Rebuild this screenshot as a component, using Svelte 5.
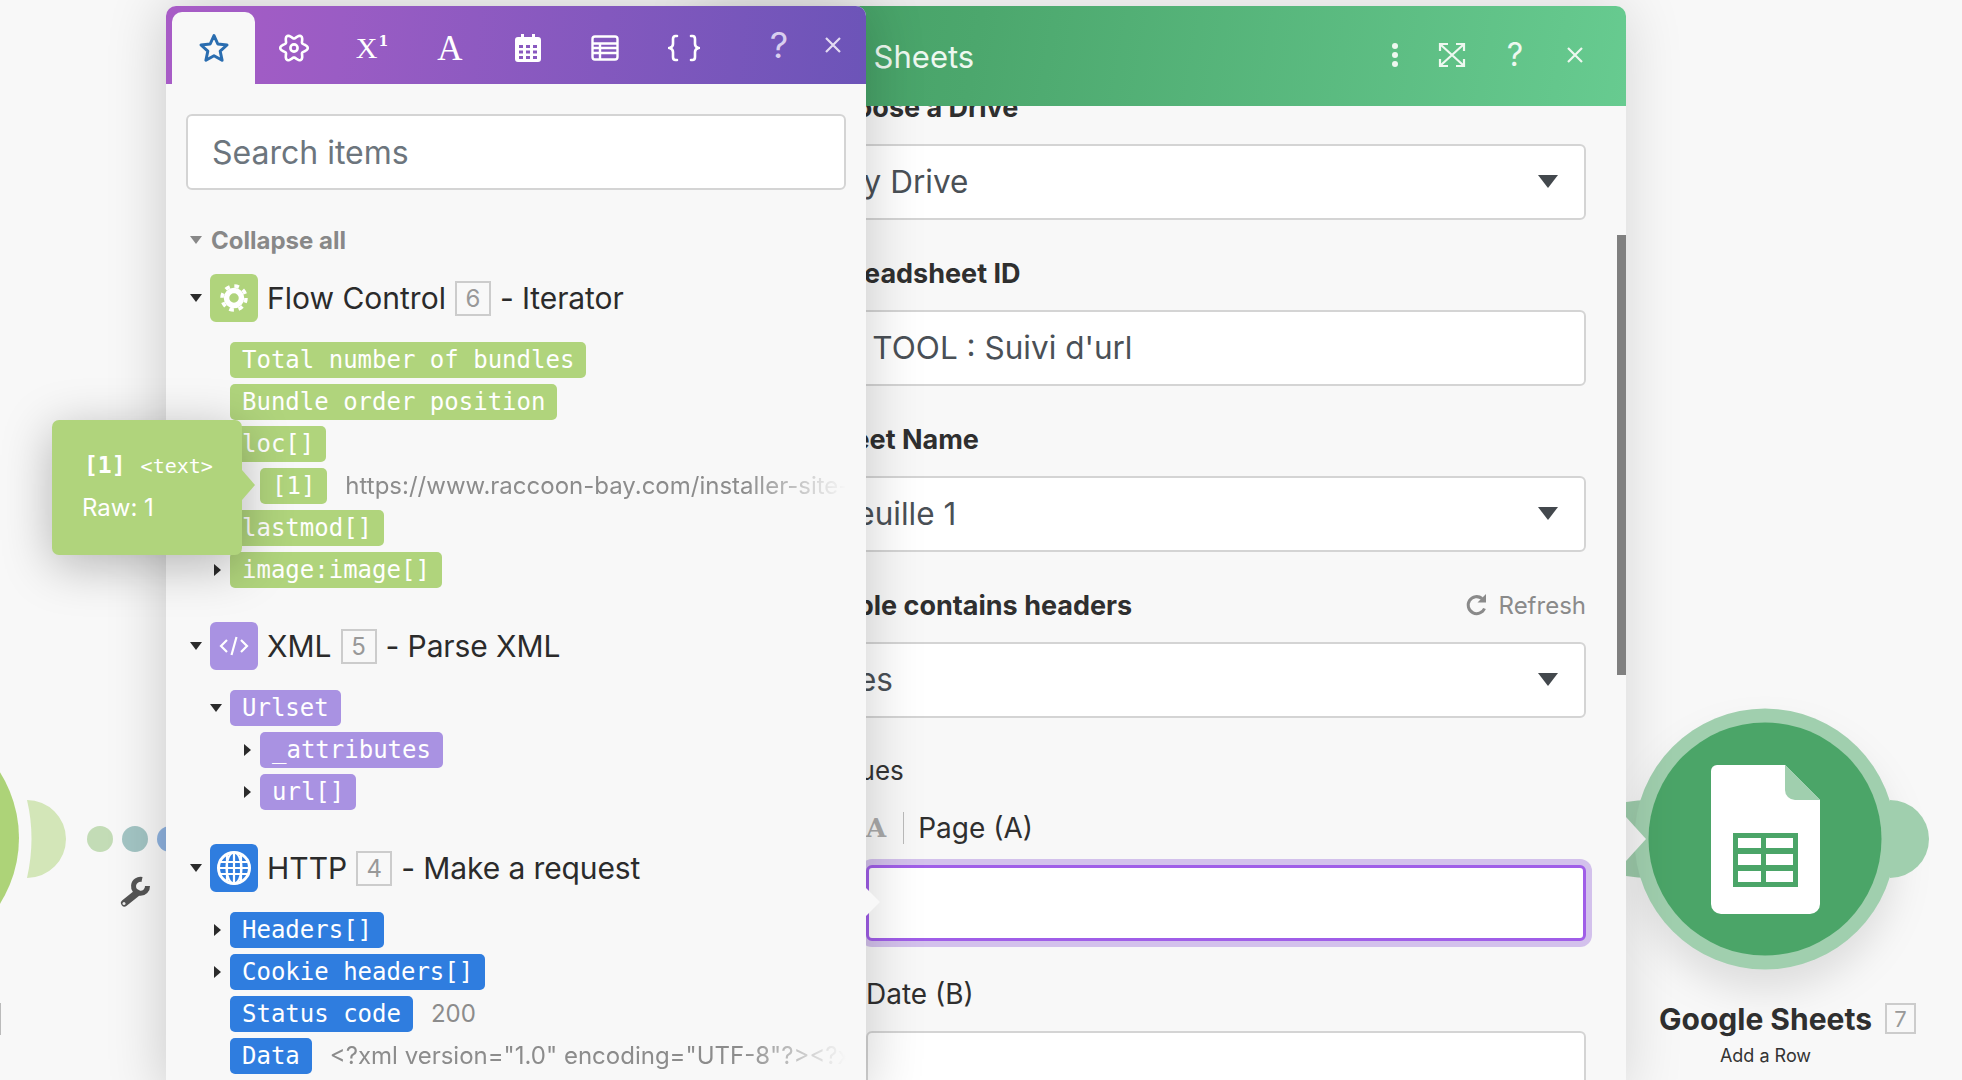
<script>
	const sections = [
		{
			tone: 'green',
			icon: 'gear',
			name: 'Flow Control',
			num: 6,
			action: 'Iterator',
			rows: [
				{ label: 'Total number of bundles', level: 1 },
				{ label: 'Bundle order position', level: 1 },
				{ label: 'loc[]', level: 1 },
				{ label: '[1]', level: 2, value: 'https://www.raccoon-bay.com/installer-site-web-wordpress/', fade: true },
				{ label: 'lastmod[]', level: 1 },
				{ label: 'image:image[]', level: 1, caret: 'right' }
			]
		},
		{
			tone: 'purple',
			icon: 'code',
			name: 'XML',
			num: 5,
			action: 'Parse XML',
			rows: [
				{ label: 'Urlset', level: 1, caret: 'down' },
				{ label: '_attributes', level: 2, caret: 'right' },
				{ label: 'url[]', level: 2, caret: 'right' }
			]
		},
		{
			tone: 'blue',
			icon: 'globe',
			name: 'HTTP',
			num: 4,
			action: 'Make a request',
			rows: [
				{ label: 'Headers[]', level: 1, caret: 'right' },
				{ label: 'Cookie headers[]', level: 1, caret: 'right' },
				{ label: 'Status code', level: 1, value: '200' },
				{ label: 'Data', level: 1, value: '<?xml version="1.0" encoding="UTF-8"?><?xml-stylesheet type="text/xsl"', fade: true }
			]
		}
	];

	const fields = [
		{ label: 'Choose a Drive', value: 'My Drive', select: true },
		{ label: 'Spreadsheet ID', value: 'M TOOL : Suivi d\'url' },
		{ label: 'Sheet Name', value: 'Feuille 1', select: true, inset: true },
		{ label: 'Table contains headers', value: 'Yes', select: true, inset: true, refresh: true }
	];

	// six lobed outline for the settings tab icon
	const cogPath = Array.from({ length: 72 }, (_, i) => {
		const a = (i / 72) * Math.PI * 2;
		const r = 11.6 + 2.2 * Math.cos(a * 6);
		return `${i ? 'L' : 'M'}${(15 + r * Math.cos(a)).toFixed(2)} ${(15 + r * Math.sin(a)).toFixed(2)}`;
	}).join('') + 'Z';
</script>

<div class="canvas">
	<!-- modules behind the panels -->
	<svg class="flow-left" viewBox="0 0 200 180">
		<circle cx="-104" cy="88" r="123" fill="#add378" />
		<path d="M27 50A39 39 0 0 1 27 128Q36 88 27 50Z" fill="#d3e6b8" />
		<circle cx="100" cy="89" r="13" fill="#c3dcb6" />
		<circle cx="135" cy="89" r="13" fill="#a3c5c4" />
		<circle cx="170" cy="89" r="13" fill="#8fb3e0" />
		<path d="M142 129.500A7 7 0 1 0 147.500 136" fill="none" stroke="#555" stroke-width="5" />
		<path d="M137 143L124.500 153" stroke="#555" stroke-width="7" stroke-linecap="round" />
		<circle cx="124" cy="153.500" r="1.500" fill="#eee" />
	</svg>
	<div class="edge-mark"></div>

	<div class="sheets-node">
		<svg class="sheets-graphic" viewBox="0 0 310 270">
			<path d="M6 94Q18 92 30 92V170Q18 170 6 168Z" fill="#a0cfae" />
			<circle class="node-ring" cx="145" cy="131" r="130.5" fill="#a0cfae" />
			<path d="M270 92A39 39 0 0 1 270 170Z" fill="#a0cfae" />
			<path d="M6 109L26 131L6 153Z" fill="#f3f3f3" />
			<circle cx="145" cy="131" r="116.5" fill="#4ba568" />
			<path d="M97 57H165L200 92V196a10 10 0 0 1-10 10H101a10 10 0 0 1-10-10V63a6 6 0 0 1 6-6Z" fill="#fff" />
			<path d="M165 57L200 92H175a10 10 0 0 1-10-10Z" fill="#a0cfae" />
			<path fill="#4ba568" fill-rule="evenodd" d="M113 125H178V179H113ZM118 130V140H141V130ZM146 130V140H173V130ZM118 146V157H141V146ZM146 146V157H173V146ZM118 163V174H141V163ZM146 163V174H173V163Z" />
		</svg>
		<div class="node-title">
			<strong>Google Sheets</strong>
			<span class="num small">7</span>
		</div>
		<div class="node-sub">Add a Row</div>
	</div>

	<!-- module settings window -->
	<section class="sheets">
		<header class="sheets-head">
			<span class="sheets-title">Google Sheets</span>
			<div class="head-tools">
				<svg class="tool-dots" width="10" height="26" viewBox="0 0 10 26"><g fill="#eef8f0"><circle cx="5" cy="4" r="3" /><circle cx="5" cy="13" r="3" /><circle cx="5" cy="22" r="3" /></g></svg>
				<svg width="28" height="26" viewBox="0 0 28 26" fill="none" stroke="#eef8f0" stroke-width="2.200"><path d="M2 9V2H10M18 2H26V9M2 17V24H10M18 24H26V17M3 3L25 23M25 3L3 23" /></svg>
				<span class="qmark">?</span>
				<svg width="18" height="18" viewBox="0 0 18 18" stroke="#eef8f0" stroke-width="2.200"><path d="M2 2L16 16M16 2L2 16" /></svg>
			</div>
		</header>
		<div class="sheets-body">
			{#each fields as field}
				<div class="field-head" class:shifted={field.refresh}>
					<span class="field-label">{field.label}</span>
					{#if field.refresh}
						<span class="refresh">
							<svg width="24" height="24" viewBox="0 0 24 24" fill="none" stroke="#8a8a8a" stroke-width="3"><path d="M19.500 15.500A8.500 8.500 0 1 1 17 5.500" /><path d="M21 1V9.500H12.500Z" fill="#8a8a8a" stroke="none" /></svg>
							Refresh
						</span>
					{/if}
				</div>
				<div class="input" class:inset={field.inset}>
					<span>{field.value}</span>
					{#if field.select}<i class="select-caret"></i>{/if}
				</div>
			{/each}

			<div class="values-title">Values</div>
			<div class="value-name first"><b class="type-a">A</b><i class="divider"></i>Page (A)</div>
			<div class="input nested focused"></div>
			<div class="value-name second">Date (B)</div>
			<div class="input nested"></div>
		</div>
		<div class="scrollbar"></div>
	</section>

	<!-- mapping panel -->
	<section class="mapper">
		<header class="tabs">
			<div class="tab active">
				<svg width="32" height="32" viewBox="0 0 32 32" fill="none" stroke="#2a6db0" stroke-width="3" stroke-linejoin="round"><path d="M16 3.500L19.800 12L29 13L22.200 19.200L24.100 28.300L16 23.700L7.900 28.300L9.800 19.200L3 13L12.200 12Z" /></svg>
			</div>
			<div class="tab">
				<svg width="30" height="30" viewBox="0 0 30 30" fill="none" stroke="#fff" stroke-width="2.600" stroke-linejoin="round"><circle cx="15" cy="15" r="3.600" /><path d={cogPath} /></svg>
			</div>
			<div class="tab glyph">X<sup>1</sup></div>
			<div class="tab glyph big">A</div>
			<div class="tab">
				<svg width="26" height="30" viewBox="0 0 26 30">
					<path fill="#fff" fill-rule="evenodd" d="M3 4H6V1H9V4H17V1H20V4H23a3 3 0 0 1 3 3V26a3 3 0 0 1-3 3H3a3 3 0 0 1-3-3V7a3 3 0 0 1 3-3ZM4 12V15H8V12ZM11 12V15H15V12ZM18 12V15H22V12ZM4 17.500V20.500H8V17.500ZM11 17.500V20.500H15V17.500ZM18 17.500V20.500H22V17.500ZM4 23V26H8V23ZM11 23V26H15V23ZM18 23V26H22V23Z" />
				</svg>
			</div>
			<div class="tab">
				<svg class="table-icon" width="28" height="26" viewBox="0 0 28 26" fill="none" stroke="#fff" stroke-width="2.400"><rect x="1.500" y="1.500" width="25" height="23" rx="2.500" /><path d="M1.500 8.500H26.500M1.500 13H26.500M1.500 18H26.500M9 8.500V24" /></svg>
			</div>
			<div class="tab">
				<svg width="32" height="28" viewBox="0 0 32 28" fill="none" stroke="#fff" stroke-width="2.600" stroke-linecap="round"><path d="M9 2H7.500Q5 2 5 5V10Q5 13 1.500 14Q5 15 5 18V23Q5 26 7.500 26H9M23 2H24.500Q27 2 27 5V10Q27 13 30.500 14Q27 15 27 18V23Q27 26 24.500 26H23" /></svg>
			</div>
			<span class="tab-help">?</span>
			<svg class="tab-close" width="18" height="18" viewBox="0 0 18 18" stroke="#e3dbf2" stroke-width="2.200"><path d="M2 2L16 16M16 2L2 16" /></svg>
		</header>

		<div class="mapper-body">
			<div class="search">Search items</div>
			<div class="collapse"><i class="caret down muted"></i>Collapse all</div>

			{#each sections as section}
				<div class="section {section.tone}">
					<div class="section-head">
						<i class="caret down"></i>
						<span class="badge">
							{#if section.icon === 'gear'}
								<svg width="30" height="30" viewBox="0 0 30 30" fill="none" stroke="#fff"><circle cx="15" cy="15" r="7.500" stroke-width="5.500" /><circle cx="15" cy="15" r="12" stroke-width="3.500" stroke-dasharray="4.710 4.710" /></svg>
							{:else if section.icon === 'code'}
								<svg width="30" height="24" viewBox="0 0 30 24" fill="none" stroke="#fff" stroke-width="2.200"><path d="M8 6L2 12L8 18M22 6L28 12L22 18M17.500 3L12.500 21" /></svg>
							{:else}
								<svg width="36" height="36" viewBox="0 0 36 36" fill="none" stroke="#fff" stroke-width="2.200"><circle cx="18" cy="18" r="15.500" stroke-width="3" /><ellipse cx="18" cy="18" rx="7.500" ry="15.500" /><path d="M18 2.500V33.500M3 12H33M3 18H33M3 24H33M11 4V32M25 4V32" /></svg>
							{/if}
						</span>
						<span class="section-name">{section.name}</span>
						<span class="num">{section.num}</span>
						<span class="section-name action">- {section.action}</span>
					</div>
					<div class="rows">
						{#each section.rows as row}
							<div class="row" class:deep={row.level === 2}>
								<span class="caret-slot">
									{#if row.caret}<i class="caret {row.caret}"></i>{/if}
								</span>
								<span class="pill">{row.label}</span>
								{#if row.value}
									<span class="value" class:fade={row.fade}>{row.value}</span>
								{/if}
							</div>
						{/each}
					</div>
				</div>
			{/each}
		</div>
		<i class="pointer"></i>
	</section>

	<div class="tooltip">
		<div class="tip-key"><b>[1]</b> <span>&lt;text&gt;</span></div>
		<div class="tip-raw">Raw: 1</div>
	</div>
</div>

<style>
	:global(body) {
		margin: 0;
		background: #f8f8f8;
	}

	.canvas {
		position: relative;
		width: 1962px;
		height: 1080px;
		overflow: hidden;
		background: #f8f8f8;
		font-family: Inter, 'Noto Sans', sans-serif;
		color: #2b2b2b;
	}

	.flow-left {
		position: absolute;
		left: 0;
		top: 750px;
		width: 200px;
		height: 180px;
	}

	.edge-mark {
		position: absolute;
		left: 0;
		top: 1003px;
		width: 1px;
		height: 32px;
		background: #bbb;
	}

	/* google sheets module */
	.sheets-node {
		position: absolute;
		left: 1620px;
		top: 708px;
		width: 310px;
	}

	.sheets-graphic {
		display: block;
		width: 310px;
		height: 270px;
		overflow: visible;
	}

	.node-ring {
		filter: drop-shadow(0 22px 18px rgba(0, 0, 0, 0.1));
	}

	.node-title {
		display: flex;
		align-items: center;
		gap: 13px;
		margin: 25px 0 0 39px;
		font-size: 30px;
		line-height: 30px;
	}

	.node-title strong {
		font-weight: 700;
		color: #2f2f2f;
	}

	.node-sub {
		margin: 11px 0 0;
		width: 291px;
		text-align: center;
		font-size: 18px;
		line-height: 22px;
		color: #333;
	}

	/* settings window */
	.sheets {
		position: absolute;
		left: 700px;
		top: 6px;
		width: 926px;
		height: 1090px;
		background: #f8f8f8;
		border-radius: 10px 10px 0 0;
		box-shadow: 0 0 60px rgba(0, 0, 0, 0.14);
		overflow: hidden;
	}

	.sheets-head {
		position: relative;
		z-index: 1;
		display: flex;
		align-items: center;
		justify-content: space-between;
		height: 100px;
		padding: 0 42px 0 60px;
		background: linear-gradient(100deg, #429e62 0%, #4ca76d 30%, #67cb90 100%);
		color: #eef8f0;
	}

	.sheets-title {
		font-size: 31px;
	}

	.head-tools {
		display: flex;
		align-items: center;
		gap: 36px;
		margin-top: -2px;
	}

	.tool-dots {
		margin-right: 2px;
	}

	.qmark {
		width: 22px;
		font-size: 32px;
		line-height: 26px;
		text-align: center;
		margin-left: 2px;
		margin-right: 4px;
	}

	.sheets-body {
		margin-top: -16px;
		padding: 0 40px 0 122px;
	}

	.field-head {
		display: flex;
		align-items: center;
		justify-content: space-between;
		height: 34px;
		margin-bottom: 20px;
	}

	.field-label {
		margin-left: -3px;
		font-size: 27px;
		font-weight: 700;
		color: #2f2f2f;
	}

	.field-head.shifted .field-label {
		margin-left: 3px;
	}

	.refresh {
		display: flex;
		align-items: center;
		gap: 10px;
		font-size: 24px;
		color: #8a8a8a;
	}

	.input {
		box-sizing: border-box;
		display: flex;
		align-items: center;
		justify-content: space-between;
		height: 76px;
		padding: 0 26px 2px 11px;
		margin-bottom: 36px;
		background: #fff;
		border: 2px solid #d4d4d4;
		border-radius: 6px;
		font-size: 31.5px;
		color: #4a5056;
	}

	.input.inset {
		padding-left: 15px;
	}

	.select-caret {
		width: 0;
		height: 0;
		border-left: 10px solid transparent;
		border-right: 10px solid transparent;
		border-top: 13px solid #43484d;
	}

	.values-title {
		margin-top: 2px;
		font-size: 26px;
		line-height: 34px;
		color: #333;
	}

	.value-name {
		display: flex;
		align-items: center;
		height: 34px;
		margin-left: 44px;
		font-size: 28px;
		color: #2f2f2f;
	}

	.value-name.first {
		margin-top: 23px;
		margin-bottom: 20px;
	}

	.value-name.second {
		margin-top: 1px;
		margin-bottom: 20px;
	}

	.type-a {
		font-family: 'DejaVu Serif', serif;
		font-size: 26px;
		color: #aaa;
	}

	.divider {
		width: 1px;
		height: 32px;
		margin: 0 14px 0 17px;
		background: #bbb;
	}

	.input.nested {
		margin-left: 44px;
	}

	.input.focused {
		border: 3px solid #a05ee8;
		box-shadow: 0 0 0 6px #d3c1ec;
	}

	.scrollbar {
		position: absolute;
		right: 0;
		top: 229px;
		width: 9px;
		height: 440px;
		background: #808080;
	}

	/* mapping panel */
	.mapper {
		position: absolute;
		z-index: 2;
		left: 166px;
		top: 6px;
		width: 700px;
		height: 1090px;
		background: #f8f8f8;
		border-radius: 10px 10px 0 0;
		box-shadow: 0 0 60px rgba(0, 0, 0, 0.2);
	}

	.tabs {
		display: flex;
		align-items: flex-end;
		height: 78px;
		padding-left: 6px;
		border-radius: 10px 10px 0 0;
		background: linear-gradient(95deg, #a85cc6 0%, #9a5cc4 25%, #6c54b8 100%);
	}

	.tab {
		display: flex;
		align-items: center;
		justify-content: center;
		width: 78px;
		height: 72px;
		color: #fff;
	}

	.tab.active {
		width: 83px;
		background: #f8f8f8;
		border-radius: 10px 10px 0 0;
	}

	.tab.glyph {
		font-family: 'Liberation Serif', serif;
		font-size: 30px;
		line-height: 30px;
	}

	.tab.glyph.big {
		font-size: 35px;
		line-height: 35px;
	}

	.tab.glyph sup {
		font-family: 'DejaVu Serif', serif;
		font-size: 14px;
		line-height: 14px;
		margin-top: -14px;
		margin-left: 1px;
		font-weight: 700;
	}

	.table-icon {
		margin-right: 2px;
	}

	.tab-help {
		margin-left: 41px;
		width: 30px;
		height: 64px;
		text-align: center;
		font-size: 36px;
		line-height: 50px;
		color: #d9cfef;
	}

	.tab-close {
		margin: 0 0 30px 30px;
	}

	.mapper-body {
		padding: 30px 20px 0;
	}

	.search {
		box-sizing: border-box;
		height: 76px;
		padding: 0 24px;
		background: #fff;
		border: 2px solid #d4d4d4;
		border-radius: 6px;
		font-size: 32px;
		line-height: 74px;
		color: #6c757d;
	}

	.collapse {
		display: flex;
		align-items: center;
		gap: 9px;
		height: 34px;
		margin: 33px 0 17px;
		font-size: 24px;
		font-weight: 700;
		color: #888;
	}

	.collapse .caret {
		margin-left: 4px;
	}

	.caret {
		display: block;
		width: 0;
		height: 0;
	}

	.caret.down {
		border-left: 6px solid transparent;
		border-right: 6px solid transparent;
		border-top: 8px solid #2b2b2b;
	}

	.caret.down.muted {
		border-top-color: #888;
	}

	.caret.right {
		border-top: 6px solid transparent;
		border-bottom: 6px solid transparent;
		border-left: 7px solid #2b2b2b;
		margin-left: 4px;
	}

	.section {
		margin-bottom: 34px;
	}

	.section-head {
		display: flex;
		align-items: center;
		gap: 9px;
		height: 48px;
		margin-bottom: 20px;
	}

	.section-head > .caret {
		margin-left: 4px;
	}

	.badge {
		display: flex;
		align-items: center;
		justify-content: center;
		width: 48px;
		height: 48px;
		margin-left: -1px;
		border-radius: 6px;
		background: var(--tone);
	}

	.section-name {
		font-size: 30px;
		white-space: nowrap;
		color: #2b2b2b;
	}

	.section-name.action {
		letter-spacing: -0.1px;
	}

	.num {
		box-sizing: border-box;
		display: flex;
		align-items: center;
		justify-content: center;
		width: 36px;
		height: 35px;
		border: 2px solid #ccc;
		font-size: 24px;
		font-weight: 400;
		color: #999;
	}

	.num.small {
		width: 31px;
		height: 31px;
		font-size: 22px;
	}

	.green { --tone: #b0d47c; }
	.purple { --tone: #a992e2; }
	.blue { --tone: #2f7ddf; }

	.rows {
		display: flex;
		flex-direction: column;
		gap: 6px;
	}

	.row {
		display: flex;
		align-items: center;
		height: 36px;
		padding-left: 24px;
	}

	.row.deep {
		padding-left: 54px;
	}

	.caret-slot {
		display: flex;
		align-items: center;
		flex: none;
		width: 20px;
	}

	.pill {
		flex: none;
		height: 36px;
		padding: 0 12px;
		border-radius: 5px;
		background: var(--tone);
		font-family: 'DejaVu Sans Mono', monospace;
		font-size: 24px;
		line-height: 37px;
		color: #fff;
		white-space: pre;
	}

	.value {
		flex: 1;
		min-width: 0;
		margin: -2px 0 0 18px;
		overflow: hidden;
		white-space: nowrap;
		font-size: 24px;
		color: #8c8c8c;
	}

	.value.fade {
		mask-image: linear-gradient(90deg, #000 80%, transparent 100%);
	}

	.pointer {
		position: absolute;
		left: 100%;
		top: 882px;
		width: 0;
		height: 0;
		border-top: 14px solid transparent;
		border-bottom: 14px solid transparent;
		border-left: 14px solid #f8f8f8;
	}

	.tooltip {
		position: absolute;
		z-index: 3;
		left: 52px;
		top: 420px;
		box-sizing: border-box;
		width: 190px;
		height: 135px;
		padding: 28px 0 0 32px;
		border-radius: 7px;
		background: #b0d47c;
		box-shadow: 0 10px 50px rgba(0, 0, 0, 0.28);
		color: #fff;
	}

	.tooltip::after {
		content: '';
		position: absolute;
		left: 100%;
		top: 50px;
		border-top: 15px solid transparent;
		border-bottom: 15px solid transparent;
		border-left: 13px solid #b0d47c;
	}

	.tip-key {
		font-family: 'DejaVu Sans Mono', monospace;
		font-size: 20px;
		line-height: 34px;
		white-space: nowrap;
	}

	.tip-key b {
		margin-right: 3px;
		font-size: 23px;
	}

	.tip-raw {
		margin-top: 8px;
		margin-left: -2px;
		font-size: 24px;
		line-height: 34px;
	}
</style>
